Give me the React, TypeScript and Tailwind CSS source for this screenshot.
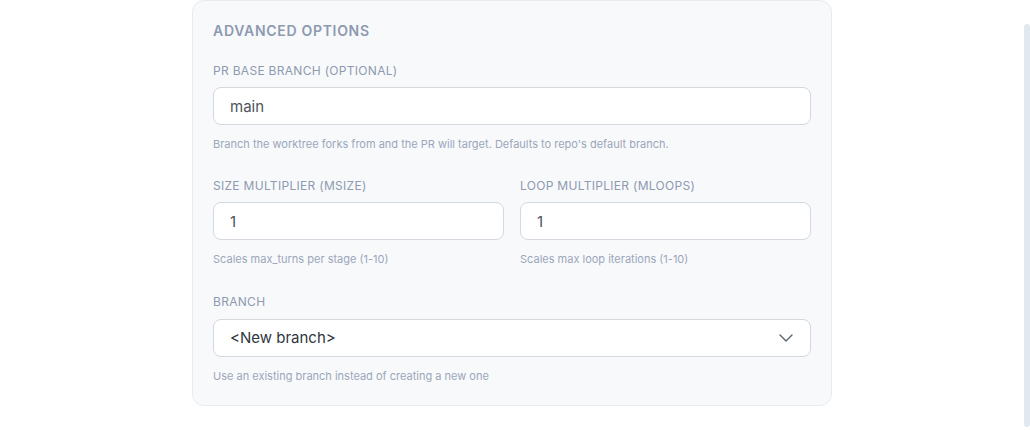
import { ChevronDown } from 'lucide-react'

function Field({ label, value, help }: { label: string; value: string; help: string }) {
  return (
    <div className="flex flex-col">
      <label className="text-[12px] leading-4 font-normal uppercase tracking-wide text-[#8d9ab0]">
        {label}
      </label>
      <input
        readOnly
        value={value}
        className="mt-2 h-[38px] w-full rounded-lg border border-[#d5d8de] bg-white px-4 text-[15px] text-[#4d535c] outline-none"
      />
      <p className="mt-3 text-[11px] leading-[14px] text-[#9ba7ba]">{help}</p>
    </div>
  )
}

export default function App() {
  return (
    <div className="flex h-[430px] w-full bg-white font-['Inter',sans-serif]">
      <div className="flex flex-1 justify-center">
        <div className="h-[406px] w-[640px] rounded-xl border border-[#e8ebef] bg-[#f8f9fb] px-5 pt-5">
          <h3 className="text-[14px] leading-5 font-semibold uppercase tracking-wider text-[#8d9ab0]">
            Advanced Options
          </h3>
          <div className="mt-[22px] flex flex-col gap-[27px]">
            <Field
              label="PR Base Branch (optional)"
              value="main"
              help="Branch the worktree forks from and the PR will target. Defaults to repo's default branch."
            />
            <div className="grid grid-cols-2 gap-4">
              <Field label="Size Multiplier (msize)" value="1" help="Scales max_turns per stage (1-10)" />
              <Field label="Loop Multiplier (mloops)" value="1" help="Scales max loop iterations (1-10)" />
            </div>
            <div className="mt-px flex flex-col">
              <label className="text-[12px] leading-4 font-normal uppercase tracking-wide text-[#8d9ab0]">
                Branch
              </label>
              <div className="mt-[9px] flex h-[38px] items-center justify-between rounded-lg border border-[#d5d8de] bg-white pl-4 pr-3">
                <span className="text-[15px] text-[#30363e]">&lt;New branch&gt;</span>
                <ChevronDown className="h-6 w-6 text-[#5b6270]" strokeWidth={1.4} />
              </div>
              <p className="mt-3 text-[11px] leading-[14px] text-[#9ba7ba]">
                Use an existing branch instead of creating a new one
              </p>
            </div>
          </div>
        </div>
      </div>
      <div className="w-[6px] pt-6 pb-[3px]">
        <div className="h-full w-full rounded-full bg-[#e2e8f0]" />
      </div>
    </div>
  )
}
